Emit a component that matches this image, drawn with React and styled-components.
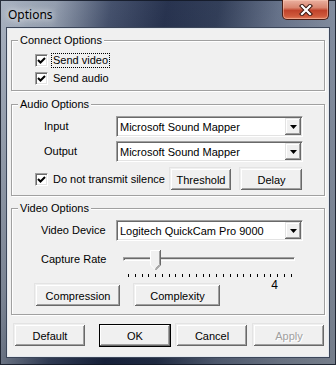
import React from 'react';
import styled, { createGlobalStyle } from 'styled-components';

const GlobalStyle = createGlobalStyle`
  html, body {
    margin: 0;
    padding: 0;
  }

  body {
    width: 336px;
    height: 365px;
    overflow: hidden;
    font-family: "Liberation Sans", Arial, sans-serif;
    font-size: 11px;
    color: #000;
  }

  * {
    box-sizing: border-box;
  }
`

const Window = styled.div`
  width: 336px;
  height: 365px;
  display: flex;
  flex-direction: column;
  background:
    linear-gradient(180deg, rgba(255, 255, 255, 0.06), rgba(0, 0, 0, 0.18)),
    linear-gradient(100deg, #a5afbe 0%, #8d98aa 14%, #3a4764 28%, #1b2745 42%, #26334f 55%, #5d6a83 70%, #7e899c 86%, #909aaa 100%);
  box-shadow: inset 0 0 0 1px rgba(18, 24, 36, 0.85);
`

const TitleBar = styled.div`
  height: 28px;
  display: flex;
  align-items: flex-start;
  justify-content: space-between;
  padding: 0 7px 0 8px;
`

const Title = styled.div`
  padding-top: 6px;
  font-family: "Noto Sans", "DejaVu Sans", sans-serif;
  font-size: 12px;
  line-height: 17px;
  color: #000;
  text-shadow: 0 0 6px rgba(255, 255, 255, 0.9), 0 0 10px rgba(255, 255, 255, 0.7);
`

const CloseButton = styled.div`
  width: 47px;
  height: 20px;
  display: flex;
  align-items: center;
  justify-content: center;
  border: 1px solid #4a1e16;
  border-top: none;
  border-radius: 0 0 5px 5px;
  background: linear-gradient(180deg, #eab0a0 0%, #d98670 40%, #c0432b 55%, #cf5a3c 85%, #e08060 100%);
  box-shadow: inset 0 0 0 1px rgba(255, 210, 190, 0.45);
`

const Frame = styled.div`
  flex: 1;
  display: flex;
  padding: 0 7px 8px 7px;
`

const Client = styled.div`
  flex: 1;
  display: flex;
  flex-direction: column;
  background: #f0f0f0;
  border: 1px solid #e4e9ef;
  box-shadow: 0 0 0 1px #3c4659;
  padding: 4px 3px 0 3px;
`

const Group = styled.fieldset`
  margin: ${p => p.$mt || 0}px 0 0 0;
  padding: 0;
  min-inline-size: 0;
  border: 1px solid #a0a0a0;
  box-shadow: inset 1px 1px #fff, 1px 1px #fff;
`

const Legend = styled.legend`
  margin-left: 6px;
  padding: 0 2px;
  font-size: 11px;
  line-height: 14px;
  background: #f0f0f0;
`

const GroupBody = styled.div`
  display: flex;
  flex-direction: column;
  padding: ${p => p.$pad};
`

const CheckRow = styled.div`
  display: flex;
  flex: ${p => (p.$grow ? '1 1 0' : '0 0 auto')};
  min-width: 0;
  align-items: center;
  height: ${p => p.$h || 18}px;
  gap: 4px;
`

const Box = styled.span`
  width: 13px;
  height: 13px;
  flex-shrink: 0;
  display: flex;
  align-items: center;
  justify-content: center;
  background: #fff;
  border: 1px solid;
  border-color: #a0a0a0 #fff #fff #a0a0a0;
  box-shadow: inset 1px 1px #696969, inset -1px -1px #e3e3e3;
`

const CheckText = styled.span`
  padding: 0 1px;
  line-height: 13px;
  white-space: nowrap;
  outline: ${p => (p.$focus ? '1px dotted #000' : 'none')};
`

const FieldRow = styled.div`
  display: flex;
  align-items: center;
  height: 21px;
  margin-top: ${p => p.$mt || 0}px;
`

const FieldLabel = styled.span`
  width: 81px;
  flex-shrink: 0;
  padding-left: ${p => p.$indent}px;
  line-height: ${p => p.$lh || 13}px;
  white-space: nowrap;
`

const SelectBox = styled.div`
  width: 187px;
  height: 21px;
  display: flex;
  align-items: center;
  padding: 1px 1px 1px 3px;
  background: #fff;
  border: 1px solid;
  border-color: #a0a0a0 #fff #fff #a0a0a0;
  box-shadow: inset 1px 1px #696969, inset -1px -1px #e3e3e3;
`

const SelectText = styled.span`
  flex: 1;
  white-space: nowrap;
  overflow: hidden;
`

const DropButton = styled.span`
  width: 16px;
  height: 17px;
  display: flex;
  align-items: center;
  justify-content: center;
  background: #f0f0f0;
  box-shadow: inset -1px -1px #696969, inset 1px 1px #e3e3e3, inset -2px -2px #a0a0a0, inset 2px 2px #fff;
`

const Button = styled.div`
  width: ${p => p.$w}px;
  height: 23px;
  flex-shrink: 0;
  display: flex;
  align-items: center;
  justify-content: center;
  background: #f0f0f0;
  color: ${p => (p.$disabled ? '#a0a0a0' : '#000')};
  text-shadow: ${p => (p.$disabled ? '1px 1px #fff' : 'none')};
  border: 1px solid ${p => (p.$default ? '#000' : 'transparent')};
  box-shadow: ${p => (p.$default
    ? 'inset -1px -1px #696969, inset 1px 1px #fff, inset -2px -2px #a0a0a0'
    : 'inset -1px -1px #696969, inset 1px 1px #fff, inset -2px -2px #a0a0a0, -1px -1px #e3e3e3')};
  margin-left: ${p => (p.$push ? 'auto' : '0')};
`

const ButtonRow = styled.div`
  display: flex;
  align-items: center;
  gap: ${p => p.$gap}px;
  margin-top: ${p => p.$mt || 0}px;
  padding-left: ${p => p.$indent || 0}px;
  width: ${p => (p.$w ? `${p.$w}px` : 'auto')};
`

const SliderRow = styled.div`
  display: flex;
  align-items: flex-start;
  margin-top: 6px;
`

const Slider = styled.div`
  width: 187px;
  display: flex;
  flex-direction: column;
  margin-bottom: -8px;
`

const TrackArea = styled.div`
  position: relative;
  height: 24px;
  padding: 10px 8px 0 7px;
`

const Track = styled.div`
  height: 4px;
  border: 1px solid;
  border-color: #a0a0a0 #fff #fff #a0a0a0;
  box-shadow: inset 1px 1px #696969;
  background: #e3e3e3;
`

const Thumb = styled.svg`
  position: absolute;
  top: 3px;
`

const Ticks = styled.div`
  display: flex;
  justify-content: space-between;
  width: 164px;
  height: 3px;
  margin: 3px 0 0 12px;
`

const Tick = styled.span`
  width: 1px;
  height: 3px;
  background: #000;
`

const SliderValue = styled.div`
  margin-top: 2px;
  padding-right: 25px;
  text-align: right;
  line-height: 13px;
  font-size: 12px;
`

const Check = () => (
  <Box>
    <svg width="9" height="9" viewBox="0 0 9 9">
      <path d="M1 4 L3.5 6.5 L8 2" fill="none" stroke="#000" strokeWidth="2" />
    </svg>
  </Box>
);

const Select = ({ value }) => (
  <SelectBox>
    <SelectText>{value}</SelectText>
    <DropButton>
      <svg width="7" height="4" viewBox="0 0 7 4">
        <path d="M0 0 H7 L3.5 4 Z" fill="#000" />
      </svg>
    </DropButton>
  </SelectBox>
);

const TICKS = 25;
const VALUE = 4;

const CaptureSlider = () => {
  const left = 12 + (VALUE * 163) / (TICKS - 1) - 5;
  return (
    <Slider>
      <TrackArea>
        <Track />
        <Thumb width="11" height="20" viewBox="0 0 11 20" style={{ left }}>
          <path d="M0 0 H11 V15 L5.5 20 L0 15 Z" fill="#f0f0f0" />
          <path d="M0.5 15 V0.5 H10" fill="none" stroke="#fff" />
          <path d="M0.5 15 L5 19.5" fill="none" stroke="#fff" />
          <path d="M10.5 0 V15 L5.5 20" fill="none" stroke="#696969" />
          <path d="M9.5 1 V14.6 L5.5 18.6" fill="none" stroke="#a0a0a0" />
        </Thumb>
      </TrackArea>
      <Ticks>
        {Array.from({ length: TICKS }).map((_, i) => (
          <Tick key={i} />
        ))}
      </Ticks>
      <SliderValue>{VALUE}</SliderValue>
    </Slider>
  );
};

const App = () => {
  return (
    <>
      <GlobalStyle />
      <Window>
        <TitleBar>
          <Title>Options</Title>
          <CloseButton>
            <svg width="14" height="12" viewBox="0 0 14 12">
              <path d="M3 2 L11 10 M11 2 L3 10" stroke="#3c1810" strokeWidth="4.2" strokeLinecap="square" />
              <path d="M3 2 L11 10 M11 2 L3 10" stroke="#fff" strokeWidth="2.2" strokeLinecap="square" />
            </svg>
          </CloseButton>
        </TitleBar>
        <Frame>
          <Client>
            <Group>
              <Legend>Connect Options</Legend>
              <GroupBody $pad="4px 0 3px 23px">
                <CheckRow>
                  <Check />
                  <CheckText $focus>Send video</CheckText>
                </CheckRow>
                <CheckRow>
                  <Check />
                  <CheckText>Send audio</CheckText>
                </CheckRow>
              </GroupBody>
            </Group>

            <Group $mt={6}>
              <Legend>Audio Options</Legend>
              <GroupBody $pad="5px 0 4px 23px">
                <FieldRow>
                  <FieldLabel $indent={9}>Input</FieldLabel>
                  <Select value="Microsoft Sound Mapper" />
                </FieldRow>
                <FieldRow $mt={4}>
                  <FieldLabel $indent={9}>Output</FieldLabel>
                  <Select value="Microsoft Sound Mapper" />
                </FieldRow>
                <ButtonRow $gap={8} $mt={6} $w={268}>
                  <CheckRow $h={23} $grow>
                    <Check />
                    <CheckText>Do not transmit silence</CheckText>
                  </CheckRow>
                  <Button $w={62}>Threshold</Button>
                  <Button $w={63}>Delay</Button>
                </ButtonRow>
              </GroupBody>
            </Group>

            <Group $mt={5}>
              <Legend>Video Options</Legend>
              <GroupBody $pad="5px 0 7px 23px">
                <FieldRow>
                  <FieldLabel $indent={6}>Video Device</FieldLabel>
                  <Select value="Logitech QuickCam Pro 9000" />
                </FieldRow>
                <SliderRow>
                  <FieldLabel $indent={6} $lh={24}>Capture Rate</FieldLabel>
                  <CaptureSlider />
                </SliderRow>
                <ButtonRow $gap={13}>
                  <Button $w={86}>Compression</Button>
                  <Button $w={87}>Complexity</Button>
                </ButtonRow>
              </GroupBody>
            </Group>

            <ButtonRow $gap={5} $mt={9} $indent={3}>
              <Button $w={72}>Default</Button>
              <Button $w={72} $default $push>OK</Button>
              <Button $w={72}>Cancel</Button>
              <Button $w={72} $disabled>Apply</Button>
            </ButtonRow>
          </Client>
        </Frame>
      </Window>
    </>
  );
};

export default App;
